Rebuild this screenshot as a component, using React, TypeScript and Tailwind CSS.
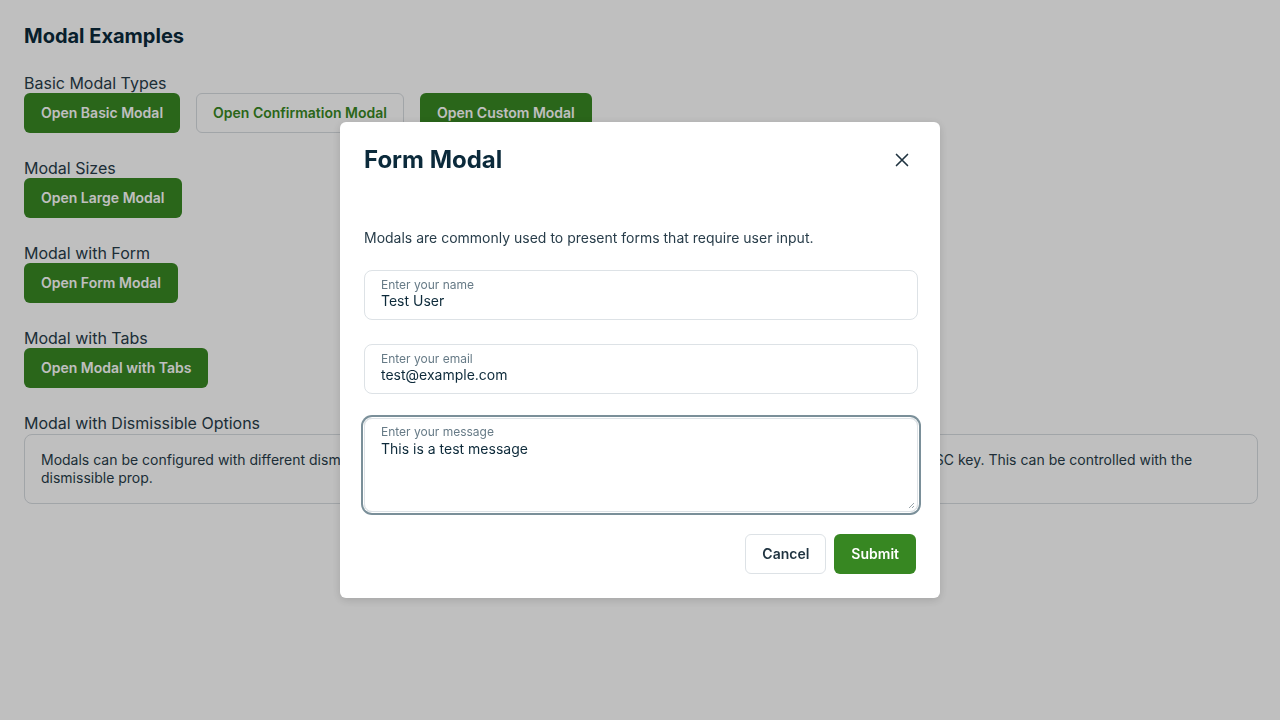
import React from 'react'

const font = { fontFamily: 'Inter, "Noto Sans", sans-serif' }

const GreenButton = ({ children }: { children: React.ReactNode }) => (
    <button className="h-10 px-4 rounded-md border border-transparent bg-[#388823] text-white text-sm font-semibold">{children}</button>
)

const Field = ({ label, value }: { label: string; value: string }) => (
    <div className="h-[50px] rounded-lg border border-[#dde2e6] px-4 pt-[6px]">
        <div className="text-xs leading-4 text-[#677b87]">{label}</div>
        <div className="text-sm leading-4 text-[#0d2a3a]">{value}</div>
    </div>
)

const App = () => {
    return (
        <div className="relative min-h-[720px] bg-white pt-6 pl-6 pr-[22px] pb-6 text-[#283d4a]" style={font}>
            <h1 className="text-xl leading-6 font-bold text-[#0b2a3b]">Modal Examples</h1>

            <div className="mt-[25px] flex flex-col gap-[25px]">
                <section>
                    <div className="text-base leading-5">Basic Modal Types</div>
                    <div className="flex gap-4">
                        <GreenButton>Open Basic Modal</GreenButton>
                        <button className="h-10 px-4 rounded-md border border-[#d7dce0] text-[#388823] text-sm font-semibold">Open Confirmation Modal</button>
                        <GreenButton>Open Custom Modal</GreenButton>
                    </div>
                </section>
                <section>
                    <div className="text-base leading-5">Modal Sizes</div>
                    <div className="flex"><GreenButton>Open Large Modal</GreenButton></div>
                </section>
                <section>
                    <div className="text-base leading-5">Modal with Form</div>
                    <div className="flex"><GreenButton>Open Form Modal</GreenButton></div>
                </section>
                <section>
                    <div className="text-base leading-5">Modal with Tabs</div>
                    <div className="flex"><GreenButton>Open Modal with Tabs</GreenButton></div>
                </section>
                <section>
                    <div className="text-base leading-5">Modal with Dismissible Options</div>
                    <div className="mt-px rounded-lg border border-[#d7dce0] px-4 py-4 text-sm leading-[18px]">
                        Modals can be configured with different dismissible options. By default, a modal can be closed by clicking the overlay or pressing the ESC key. This can be controlled with the dismissible prop.
                    </div>
                </section>
            </div>

            {/* overlay + modal */}
            <div className="fixed inset-0 bg-black/25 flex items-center justify-center">
                <div className="w-[600px] rounded-md bg-white shadow-[0_2px_10px_rgba(0,0,0,0.15)]">
                    <div className="flex items-center justify-between pl-6 pr-[26px] pt-[22px] pb-[52px]">
                        <h2 className="text-2xl leading-8 font-bold text-[#0b2a3b]">Form Modal</h2>
                        <button className="w-6 h-6 flex items-center justify-center text-[#1f3340]">
                            <svg width="22" height="22" viewBox="0 0 24 24" fill="none" stroke="currentColor" strokeWidth="1.8" strokeLinecap="round">
                                <path d="M18 6 6 18M6 6l12 12" />
                            </svg>
                        </button>
                    </div>
                    <div className="pl-6 pr-[22px]">
                        <p className="text-sm leading-5 text-[#283d4a]">Modals are commonly used to present forms that require user input.</p>
                        <div className="mt-[22px] flex flex-col gap-6">
                            <Field label="Enter your name" value="Test User" />
                            <Field label="Enter your email" value="test@example.com" />
                            <div className="relative h-[94px] rounded-lg border border-[#dde2e6] px-4 pt-[5px] ring-2 ring-[#7a8f99] ring-offset-1">
                                <div className="text-xs leading-4 text-[#677b87]">{'Enter your message'}</div>
                                <div className="text-sm leading-[18px] text-[#0d2a3a]">This is a test message</div>
                                <svg className="absolute right-[2px] bottom-[2px]" width="7" height="7" viewBox="0 0 7 7" stroke="#9aa5ab" strokeWidth="1">
                                    <path d="M6 1 1 6M6 4 4 6" />
                                </svg>
                            </div>
                        </div>
                    </div>
                    <div className="flex justify-end gap-2 px-6 pt-[22px] pb-6">
                        <button className="h-10 px-4 rounded-md border border-[#dde2e6] text-sm font-semibold text-[#1f3340]">Cancel</button>
                        <button className="h-10 px-4 rounded-md border border-transparent bg-[#378722] text-sm font-semibold text-white">Submit</button>
                    </div>
                </div>
            </div>
        </div>
    )
}

export default App
